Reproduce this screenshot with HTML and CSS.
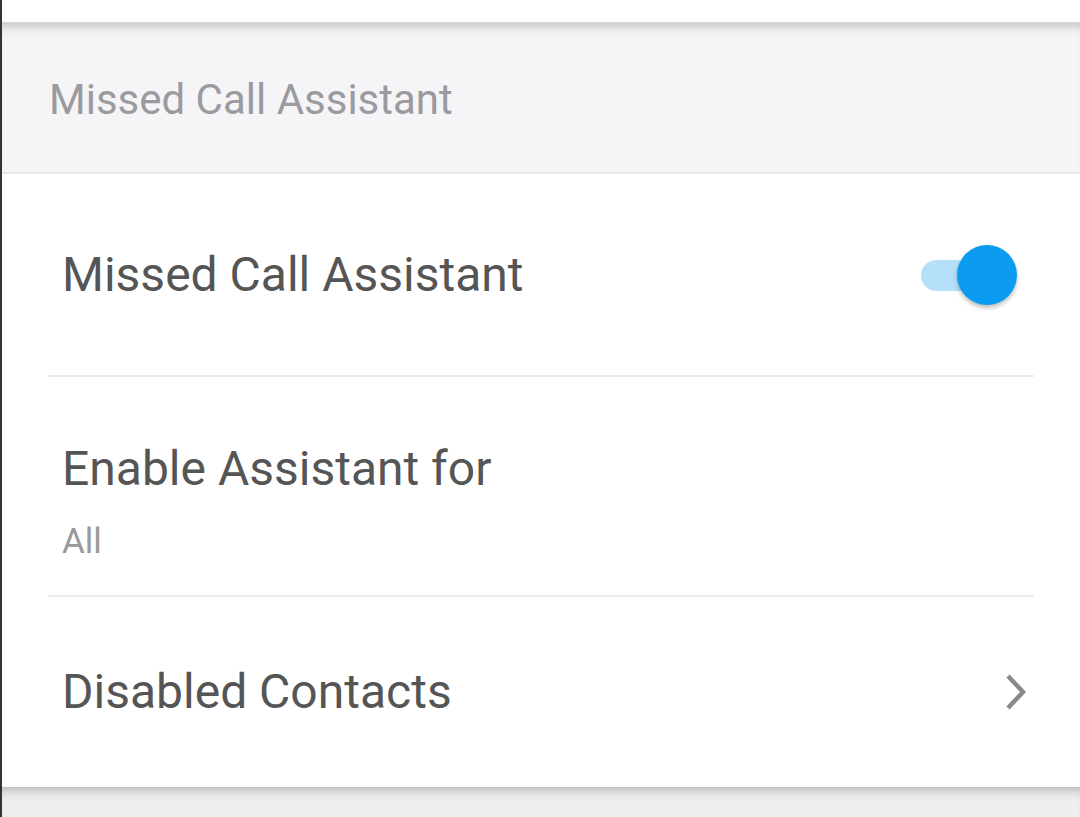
FILE: index.html
```html
<!DOCTYPE html>
<html>
<head>
<meta charset="utf-8">
<link rel="stylesheet" href="styles.css">
</head>
<body>
<div class="screen">
  <div class="topbar"></div>
  <div class="section-header">Missed Call Assistant</div>
  <div class="card">
    <div class="row row-toggle">
      <div class="title">Missed Call Assistant</div>
      <div class="switch"><div class="track"></div><div class="knob"></div></div>
    </div>
    <div class="divider"></div>
    <div class="row row-sub">
      <div class="title">Enable Assistant for</div>
      <div class="subtitle">All</div>
    </div>
    <div class="divider"></div>
    <div class="row row-link">
      <div class="title">Disabled Contacts</div>
      <svg class="chevron" width="28" height="42" viewBox="0 0 28 42"><path d="M6 5 L21 21 L6 37" fill="none" stroke="#8a8a8a" stroke-width="4.5"/></svg>
    </div>
  </div>
  <div class="footer"></div>
</div>
</body>
</html>
```
FILE: styles.css
```css
html, body { margin: 0; padding: 0; background: #fff; }
.screen {
  width: 1080px; height: 817px; overflow: hidden;
  box-sizing: border-box; border-left: 2px solid #333;
  font-family: Roboto, "Liberation Sans", sans-serif;
  display: flex; flex-direction: column;
}
.topbar { height: 22px; background: #fff; flex: none; }
.section-header {
  height: 152px; flex: none; box-sizing: border-box;
  background: #f5f5f7;
  box-shadow: inset 0 10px 12px -8px rgba(0,0,0,0.25);
  border-top: 1px solid #d8d8d8;
  border-bottom: 2px solid #e9e9eb;
  padding-left: 47px; padding-top: 4px;
  display: flex; align-items: center;
  font-size: 42px; color: #9a9a9f;
}
.card { background: #fff; flex: none; }
.row { display: flex; padding: 0 50px 0 60px; box-sizing: border-box; }
.title { font-size: 48px; line-height: 56px; color: #555; }
.row-toggle { height: 201px; align-items: center; justify-content: space-between; }
.row-sub { height: 218px; flex-direction: column; padding-top: 64px; }
.subtitle { font-size: 35px; line-height: 41px; color: #999; margin-top: 24px; }
.row-link { height: 190px; align-items: center; justify-content: space-between; padding-right: 50px; }
.divider { height: 2px; background: #ececec; margin: 0 46px; }
.switch { position: relative; width: 98px; height: 62px; margin-right: 12px; }
.track {
  position: absolute; left: 1px; top: 16px; width: 80px; height: 31px;
  border-radius: 16px; background: #b5e0fa;
}
.knob {
  position: absolute; right: 1px; top: 1px; width: 60px; height: 60px;
  border-radius: 50%; background: #0b9bf0;
  box-shadow: 0 3px 4px rgba(0,0,0,0.25);
}
.footer {
  flex: 1; background: #efefef;
  box-shadow: inset 0 10px 12px -8px rgba(0,0,0,0.3);
}
```
